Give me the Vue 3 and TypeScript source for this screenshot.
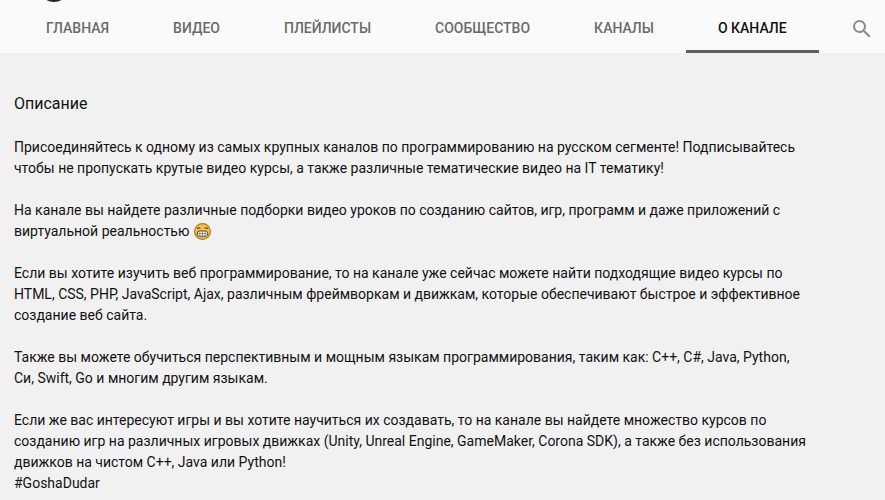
<script setup lang="ts">
const tabs = ['Главная', 'Видео', 'Плейлисты', 'Сообщество', 'Каналы', 'О канале']
const active = 'О канале'
</script>

<template>
  <div class="page">
    <header class="tabs">
      <span class="avatar-edge"></span>
      <nav class="tabs__list">
        <a v-for="tab in tabs" :key="tab" class="tab" :class="{ 'tab--active': tab === active }">{{ tab }}</a>
      </nav>
      <button class="search" type="button" aria-label="Поиск">
        <svg width="24" height="24" viewBox="0 0 24 24">
          <path
            fill="#8a8a8a"
            d="M15.5 14h-.79l-.28-.27A6.47 6.47 0 0 0 16 9.5 6.5 6.5 0 1 0 9.5 16c1.61 0 3.09-.59 4.23-1.57l.27.28v.79l5 4.99L20.49 19l-4.99-5zm-6 0C7.01 14 5 11.99 5 9.5S7.01 5 9.5 5 14 7.01 14 9.5 11.99 14 9.5 14z"
          />
        </svg>
      </button>
    </header>

    <main class="about">
      <h2 class="about__title">Описание</h2>
      <div class="about__text">
        <p>Присоединяйтесь к одному из самых крупных каналов по программированию на русском сегменте! Подписывайтесь<br />чтобы не пропускать крутые видео курсы, а также различные тематические видео на IT тематику!</p>
        <p>
          На канале вы найдете различные подборки видео уроков по созданию сайтов, игр, программ и даже приложений с<br />виртуальной реальностью
          <svg class="emoji" width="17" height="17" viewBox="0 0 16 16">
            <circle cx="8" cy="8" r="7.4" fill="#f7c33c" stroke="#a8791a" stroke-width="1.1" />
            <path d="M3 5.6c.6-1.2 2.2-1.4 3-.4M10 5.2c.8-1 2.4-.8 3 .4" fill="none" stroke="#5a3f10" stroke-width="1" />
            <rect x="3" y="7.5" width="10" height="5" rx="2.4" fill="#fff" stroke="#4a4a3a" stroke-width=".9" />
            <path d="M3.2 10h9.6M5.5 7.6v4.8M8 7.6v4.8M10.5 7.6v4.8" stroke="#6a6a6a" stroke-width=".7" />
          </svg>
        </p>
        <p>Если вы хотите изучить веб программирование, то на канале уже сейчас можете найти подходящие видео курсы по<br />HTML, CSS, PHP, JavaScript, Ajax, различным фреймворкам и движкам, которые обеспечивают быстрое и эффективное<br />создание веб сайта.</p>
        <p>Также вы можете обучиться перспективным и мощным языкам программирования, таким как: C++, C#, Java, Python,<br />Си, Swift, Go и многим другим языкам.</p>
        <p>Если же вас интересуют игры и вы хотите научиться их создавать, то на канале вы найдете множество курсов по<br />созданию игр на различных игровых движках (Unity, Unreal Engine, GameMaker, Corona SDK), а также без использования<br />движков на чистом C++, Java или Python!<br />#GoshaDudar</p>
      </div>
    </main>
  </div>
</template>

<style>
html, body { margin: 0; overflow: hidden; background: #f1f1f1; }
</style>

<style scoped>
*, *::before, *::after { box-sizing: border-box; }

.page {
  width: 885px;
  height: 500px;
  overflow: hidden;
  font-family: Roboto, "Liberation Sans", sans-serif;
  background: #f1f1f1;
}

.tabs {
  position: relative;
  display: flex;
  align-items: stretch;
  height: 53px;
  padding-left: 14px;
  background: #fafafa;
}

/* край аватара, обрезанный верхом окна */
.avatar-edge {
  position: absolute;
  left: 44px;
  top: -10px;
  width: 20px;
  height: 12px;
  border-radius: 50%;
  background: #222;
}

.tabs__list { display: flex; }

.tab {
  display: flex;
  align-items: center;
  padding: 5px 32px 0;
  border-bottom: 3px solid transparent;
  color: #6a6a6a;
  font-size: 14px;
  font-weight: 500;
  text-transform: uppercase;
}

.tab--active {
  color: #111;
  border-bottom-color: #606060;
}

.search {
  display: flex;
  align-items: center;
  margin-left: 31px;
  padding: 5px 0 0;
  border: none;
  background: none;
}

.about { padding: 41px 14px 0; }

.about__title {
  margin: 0 0 23px;
  color: #111;
  font-size: 16px;
  font-weight: 400;
  line-height: 20px;
}

.about__text {
  color: #111;
  font-size: 14px;
  line-height: 21px;
  white-space: nowrap;
}

.about__text p { margin: 0 0 21px; }

.emoji { vertical-align: -4px; margin-left: 1px; }
</style>
